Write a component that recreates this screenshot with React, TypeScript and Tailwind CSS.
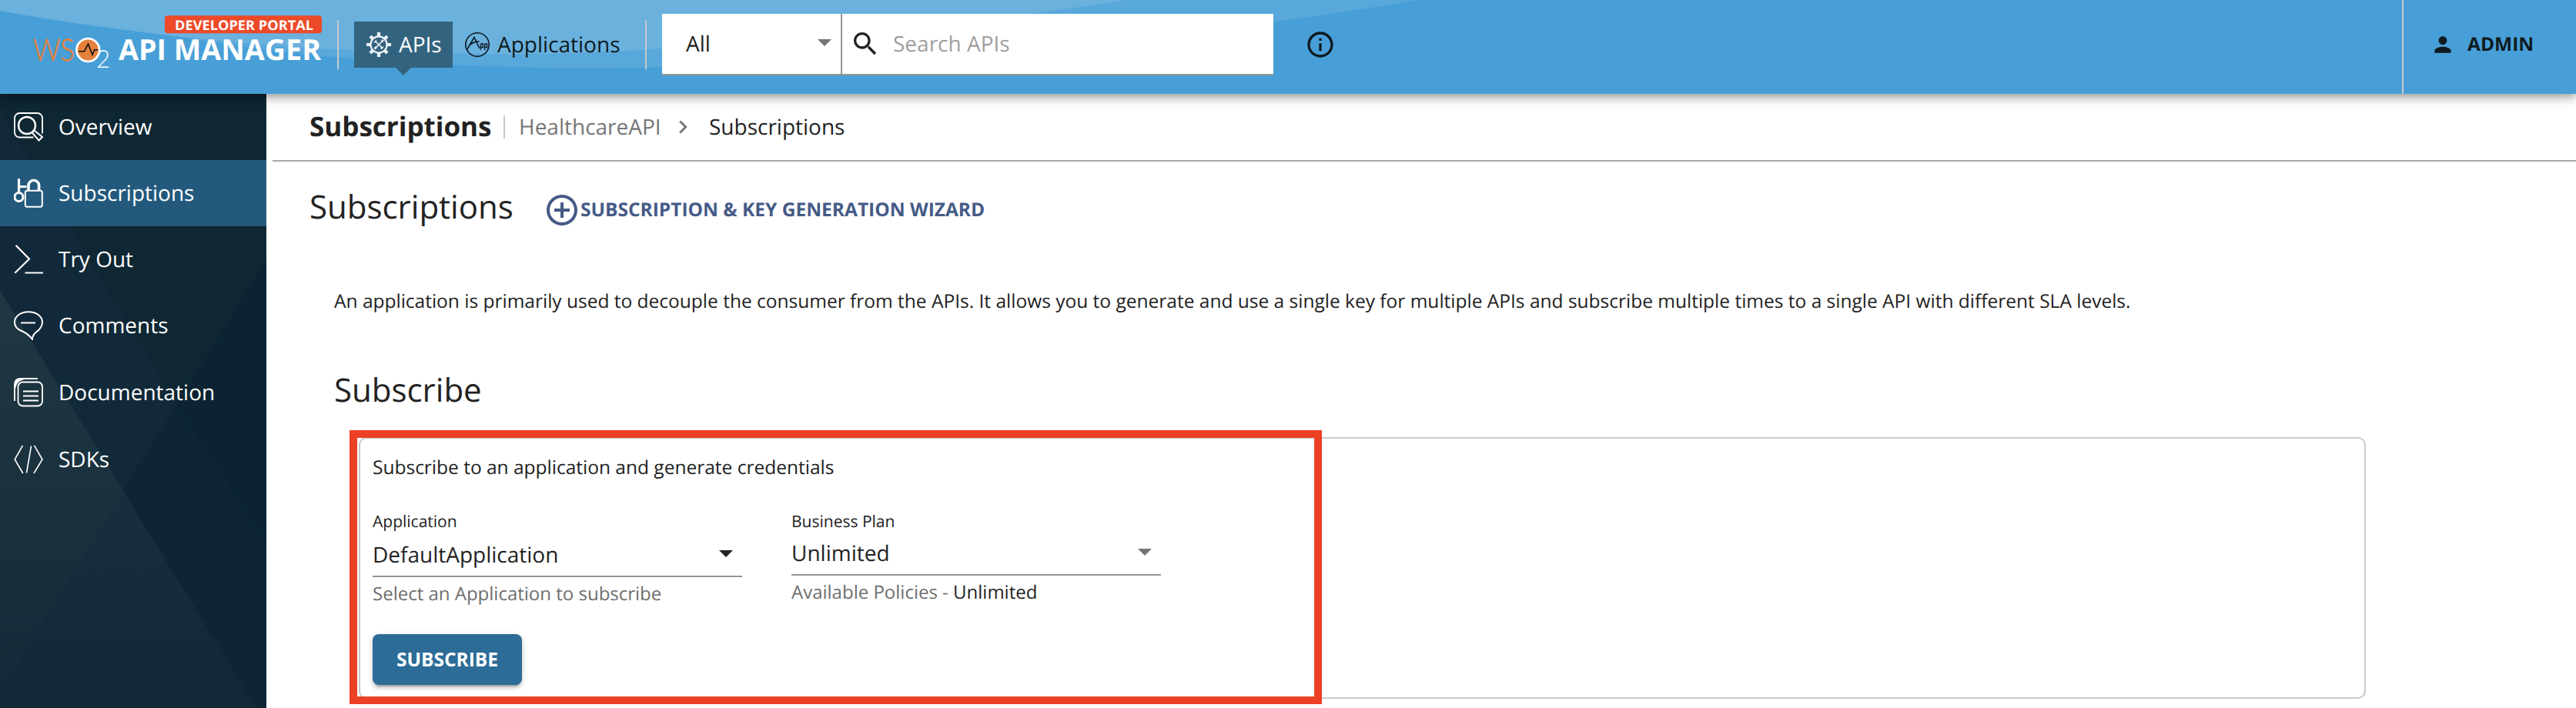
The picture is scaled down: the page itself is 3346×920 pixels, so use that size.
import type { ReactNode } from "react";

function Logo() {
  return (
    <svg width="375" height="122" viewBox="43 0 375 122" className="block shrink-0 overflow-visible">
      <text x="43" y="79" textLength="54" lengthAdjust="spacingAndGlyphs" fontFamily="Lato" fontWeight="300" fontSize="40" fill="#e5813b" stroke="#e5813b" strokeWidth="0.6">
        WS
      </text>
      <circle cx="114.3" cy="65" r="14.8" fill="#e5813b" stroke="#fff" strokeWidth="2.8" />
      <path d="M102 66.7h7.5l5-9.5 5.5 14 2.8-6.5h4.5" fill="none" stroke="#111" strokeWidth="1.6" />
      <text x="125" y="87.5" fontFamily="Lato" fontWeight="300" fontSize="32" fill="#fff" textLength="18" lengthAdjust="spacingAndGlyphs">
        2
      </text>
      <rect x="214" y="20.3" width="204" height="23" rx="4" fill="#ec4a28" />
      <text x="227" y="38.5" fontFamily="Open Sans" fontWeight="700" fontSize="17.5" fill="#fff" textLength="180" lengthAdjust="spacingAndGlyphs">
        DEVELOPER PORTAL
      </text>
      <text x="154" y="78" fontFamily="Open Sans" fontWeight="700" fontSize="37.5" fill="#fff" textLength="263" lengthAdjust="spacingAndGlyphs">
        API MANAGER
      </text>
    </svg>
  );
}

function GearIcon() {
  return (
    <svg width="32" height="32" viewBox="0 0 32 32" fill="none" stroke="#eef4fa" className="block shrink-0">
      <circle cx="16" cy="16" r="10.6" strokeWidth="2.2" />
      <path d="M16 5V0M16 32v-5M5 16H0M32 16h-5M8.2 8.2L5 5M27 27l-3.2-3.2M8.2 23.8L5 27M27 5l-3.2 3.2" strokeWidth="4.2" />
      <path d="M11.5 11.5l9.5 9.5M20.5 11.5L11 21" strokeWidth="1.6" />
      <path d="M9.8 12.6c1.2.9 3.2-.8 2.4-2.6M19.4 22c-.6-1.6 1-3.300 2.600-2.600" strokeWidth="1.5" />
      <path d="M20 12l2-2M10.500 21.500l2.500-2.500" strokeWidth="2.800" />
    </svg>
  );
}

function AppIcon() {
  return (
    <svg width="32" height="32" viewBox="0 0 32 32" fill="none" stroke="#0e1a20" className="block shrink-0">
      <circle cx="16" cy="16" r="15.200" strokeWidth="1.600" />
      <path d="M2.500 22.500L12 6.500l7 14.500M7 15.800c3.500-2.500 7.500-4 11.500-4" strokeWidth="1.600" />
      <path d="M20.400 15v8M20.400 15h3v4.500h-3M25.600 15v8M25.600 15h3v4.500h-3" strokeWidth="1.300" />
    </svg>
  );
}

function Triangle({ color }: { color: string }) {
  return (
    <svg width="18" height="9" viewBox="0 0 18 9" className="block shrink-0">
      <path d="M0 0h18L9 9z" fill={color} />
    </svg>
  );
}

function MaterialIcon({ size, d, color }: { size: number; d: string; color: string }) {
  return (
    <svg width={size} height={size} viewBox="0 0 24 24" fill={color} className="block shrink-0">
      <path d={d} />
    </svg>
  );
}

const ICONS = {
  search:
    "M15.500 14h-.79l-.28-.27C15.410 12.590 16 11.110 16 9.500 16 5.910 13.090 3 9.500 3S3 5.910 3 9.500 5.910 16 9.500 16c1.610 0 3.090-.59 4.230-1.570l.27.28v.79l5 4.990L20.490 19l-4.990-5zm-6 0C7.010 14 5 11.990 5 9.500S7.010 5 9.500 5 14 7.010 14 9.500 11.990 14 9.500 14z",
  info: "M11 7h2v2h-2zm0 4h2v6h-2zm1-9C6.480 2 2 6.480 2 12s4.480 10 10 10 10-4.480 10-10S17.520 2 12 2zm0 18c-4.410 0-8-3.590-8-8s3.590-8 8-8 8 3.590 8 8-3.590 8-8 8z",
  person:
    "M12 12c2.210 0 4-1.790 4-4s-1.790-4-4-4-4 1.790-4 4 1.790 4 4 4zm0 2c-2.670 0-8 1.340-8 4v2h16v-2c0-2.660-5.330-4-8-4z",
  add: "M13 7h-2v4H7v2h4v4h2v-4h4v-2h-4V7zm-1-5C6.480 2 2 6.480 2 12s4.480 10 10 10 10-4.480 10-10S17.520 2 12 2zm0 18c-4.410 0-8-3.590-8-8s3.590-8 8-8 8 3.590 8 8-3.590 8-8 8z",
  next: "M10 6L8.590 7.410 13.170 12l-4.580 4.590L10 18l6-6z",
};

function HeaderWaves() {
  return (
    <svg width="1860" height="122" viewBox="0 0 1860 122" className="absolute left-0 top-0">
      <path d="M0 0V14C80 30 160 38 233 48C350 68 500 86 740 88C1050 90 1500 60 1840 0Z" fill="#59a8db" />
      <path d="M0 0V14C150 40 300 58 450 65S740 72 860 63S1250 35 1462 0Z" fill="#6ab1de" />
    </svg>
  );
}

function Header() {
  return (
    <header className="relative z-10 flex h-[122px] items-start bg-[#489fd7] shadow-[0_4px_8px_-2px_rgba(0,0,0,0.2),0_8px_10px_0_rgba(0,0,0,0.14),0_2px_20px_0_rgba(0,0,0,0.12)]">
      <HeaderWaves />
      <div className="relative flex flex-1 items-start pl-[43px]">
        <Logo />
        <div className="ml-5 mt-[26px] h-16 w-0.5 bg-[#c8cacc]" />
        <nav className="flex">
          <div className="relative ml-5 mt-7 flex h-[60px] w-32 items-center bg-[#33647f] pl-4 text-white">
            <GearIcon />
            <span className="ml-2.5 text-[28px] leading-[58px]">APIs</span>
            <svg width="20" height="10" viewBox="0 0 20 10" className="absolute left-[54px] top-[60px]">
              <path d="M0 0h20L10 10z" fill="#33647f" />
            </svg>
          </div>
          <div className="mt-7 flex h-[60px] items-center pl-4 text-[#0e1a20]">
            <AppIcon />
            <span className="ml-2.5 w-[192px] text-[28px] leading-[58px]">Applications</span>
          </div>
        </nav>
        <div className="mt-[26px] h-16 w-0.5 bg-[#c8cacc]" />
        <div className="ml-5 mt-[18px] flex h-20 w-[794px] border-b-2 border-[#949494] bg-white text-[28px] leading-[78px]">
          <div className="flex w-[234px] items-center justify-between border-r-2 border-[#949494] pl-[31px] pr-3 text-[#222]">
            <span>All</span>
            <div className="-mt-1">
              <Triangle color="#757575" />
            </div>
          </div>
          <div className="flex items-center pl-2.5">
            <MaterialIcon size={40} d={ICONS.search} color="#222" />
            <span className="ml-4 text-[#a0a0a0]">Search APIs</span>
          </div>
        </div>
        <div className="ml-[41px] mt-[38px]">
          <MaterialIcon size={40} d={ICONS.info} color="#0e1a20" />
        </div>
      </div>
      <div className="flex h-full w-[226px] items-start border-l-2 border-[#c8cacc] pl-[35px] pt-[42px] text-[#0e1a20]">
        <MaterialIcon size={32} d={ICONS.person} color="#0e1a20" />
        <span className="ml-4 text-[24.5px] font-bold leading-8">ADMIN</span>
      </div>
    </header>
  );
}

function SideIcon({ children }: { children: ReactNode }) {
  return (
    <svg width="38" height="38" viewBox="0 0 38 38" fill="none" stroke="#fff" strokeWidth="1.8" className="block shrink-0">
      {children}
    </svg>
  );
}

const NAV: { label: string; row: string; icon: ReactNode }[] = [
  {
    label: "Overview",
    row: "h-[86px]",
    icon: (
      <>
        <path d="M25.500 32.500H7.500a6.500 6.500 0 0 1-6.500-6.500V7.500A6.500 6.500 0 0 1 7.500 1h23A6.500 6.500 0 0 1 37 7.500v20" />
        <circle cx="17" cy="17" r="11" strokeWidth="2.400" />
        <path d="M23.500 26l9 10.500 4.500-4.500-10.500-8.500" strokeWidth="2" />
      </>
    ),
  },
  {
    label: "Subscriptions",
    row: "h-[86px] bg-[#23597c]",
    icon: (
      <>
        <rect x="14.800" y="15.800" width="22" height="21" rx="2.500" strokeWidth="2" />
        <path d="M19 15V9a6.800 6.800 0 0 1 13.600 0v6" strokeWidth="3.600" />
        <path d="M6.500 0v17M6.500 10.500h10" strokeWidth="3.200" />
        <circle cx="6.500" cy="24" r="5.500" strokeWidth="3" />
      </>
    ),
  },
  {
    label: "Try Out",
    row: "h-[86px]",
    icon: <path d="M2.500.800L20 18.500 1.300 36.800M14.500 36.500H38" strokeWidth="2.200" />,
  },
  {
    label: "Comments",
    row: "h-[86px]",
    icon: (
      <path
        d="M19 1.200c-10 0-18 5.800-18 13.500 0 6 4 9.500 9.500 11.600 5.500 2.200 10 6 13.500 10.700.2-4 .800-6 4.500-9C34 24 37 20 37 14.700 37 7 29 1.200 19 1.200zM9 15.500h19"
        strokeWidth="2"
      />
    ),
  },
  {
    label: "Documentation",
    row: "h-[88px]",
    icon: (
      <>
        <rect x="5.500" y="5.500" width="31.500" height="31" rx="6" />
        <path d="M1 30V9c0-5 3-8 8-8h22M12 17.500h20M12 23.500h20M12 29.500h20" />
        <path d="M1 14C1 5 5 1.200 13 1.200 6 3 2.500 6 1 14z" fill="#fff" />
      </>
    ),
  },
  {
    label: "SDKs",
    row: "h-[86px]",
    icon: <path d="M11.500.800L1.200 19l10.600 18M26.500.800L37 19 26 37M22.500 1.500L16.500 36.500" strokeWidth="1.600" />,
  },
];

function SidebarBackdrop() {
  return (
    <svg width="346" height="798" viewBox="0 122 346 798" className="absolute left-0 top-0">
      <defs>
        <linearGradient id="wedge" x1="0" y1="378" x2="0" y2="920" gradientUnits="userSpaceOnUse">
          <stop offset="0" stopColor="#1e3542" />
          <stop offset="1" stopColor="#112837" />
        </linearGradient>
        <linearGradient id="wedgeLeft" x1="0" y1="378" x2="0" y2="920" gradientUnits="userSpaceOnUse">
          <stop offset="0" stopColor="#203843" />
          <stop offset="1" stopColor="#132a38" />
        </linearGradient>
      </defs>
      <path d="M0 122h346v798H0z" fill="#0f2733" />
      <path d="M346 338v582H0v-22z" fill="#0b2332" />
      <path d="M0 145L230 526 160 638 0 898z" fill="#112938" />
      <path d="M230 526L346 706V920H0v-22z" fill="#0d2535" />
      <path d="M0 378L333 920H0z" fill="url(#wedge)" />
      <path d="M0 378L161 638 0 898z" fill="url(#wedgeLeft)" />
    </svg>
  );
}

function Sidebar() {
  return (
    <aside className="relative w-[346px] shrink-0 overflow-hidden">
      <SidebarBackdrop />
      <nav className="relative flex flex-col">
        {NAV.map((item) => (
          <div key={item.label} className={`${item.row} flex items-center pl-[18px] text-white`}>
            <SideIcon>{item.icon}</SideIcon>
            <span className="ml-5 text-[28px] leading-[38px]">{item.label}</span>
          </div>
        ))}
      </nav>
    </aside>
  );
}

function Breadcrumbs() {
  return (
    <div className="ml-2 flex h-[88px] items-center border-b-2 border-[#a9a9a9] pl-12 text-[28px] leading-[38px]">
      <h1 className="w-[252px] text-[35px] font-bold leading-[48px]">Subscriptions</h1>
      <div className="h-[30px] w-0.5 bg-[#c8c8c8]" />
      <span className="ml-[18px] w-[196px] text-[#757575]">HealthcareAPI</span>
      <span className="w-[51px]">
        <MaterialIcon size={34} d={ICONS.next} color="#757575" />
      </span>
      <span>Subscriptions</span>
    </div>
  );
}

function SubscribeCard() {
  return (
    <section className="relative ml-8 mt-[33px] h-[340px] w-[2607px] rounded-[10px] border-2 border-[#c8c8c8] px-4">
      <div className="absolute -left-[14px] -top-[11px] h-[356px] w-[1263px] border-[10px] border-[#ec4025]" />
      <p className="mt-5 text-[24.5px] leading-9">Subscribe to an application and generate credentials</p>
      <div className="mt-[38px] flex items-start gap-16">
        <div className="w-[480px]">
          <div className="text-[21px] leading-7">Application</div>
          <div className="mt-2 flex h-[50px] items-start justify-between border-b-2 border-[#949494] pr-3">
            <span className="text-[28px] leading-[42px]">DefaultApplication</span>
            <span className="mt-[15px]">
              <Triangle color="#222" />
            </span>
          </div>
          <div className="mt-1 text-[24px] leading-9 text-[#6e6e6e]">Select an Application to subscribe</div>
        </div>
        <div className="w-[480px]">
          <div className="text-[21px] leading-7">Business Plan</div>
          <div className="mt-1.5 flex h-[50px] items-start justify-between border-b-2 border-[#949494] pr-3">
            <span className="text-[28px] leading-[42px]">Unlimited</span>
            <span className="mt-[15px]">
              <Triangle color="#757575" />
            </span>
          </div>
          <div className="mt-1 text-[24px] leading-9 text-[#6e6e6e]">
            Available Policies - <span className="text-[#222]">Unlimited</span>
          </div>
        </div>
      </div>
      <button className="mt-[34px] flex h-[66px] w-[194px] items-center justify-center rounded-lg bg-[#2c6c97] text-[24.5px] font-bold text-white shadow-[0_6px_2px_-4px_rgba(0,0,0,0.2),0_4px_4px_0_rgba(0,0,0,0.14),0_2px_10px_0_rgba(0,0,0,0.12)]">
        SUBSCRIBE
      </button>
    </section>
  );
}

export default function App() {
  return (
    <div className="flex h-[920px] w-[3346px] flex-col overflow-hidden bg-white font-['Open_Sans',sans-serif] text-[#222] antialiased [text-rendering:geometricPrecision]">
      <Header />
      <div className="flex flex-1">
        <Sidebar />
        <main className="flex-1">
          <Breadcrumbs />
          <div className="flex pl-14 pt-[31px]">
            <h2 className="w-[304px] text-[42px] leading-[56px]">Subscriptions</h2>
            <div className="mt-2 flex h-12 items-center text-[24.5px] font-bold text-[#455a86]">
              <MaterialIcon size={48} d={ICONS.add} color="#455a86" />
              <span>SUBSCRIPTION &amp; KEY GENERATION WIZARD</span>
            </div>
          </div>
          <div className="pl-[88px] pt-[77px]">
            <p className="text-[24.5px] leading-9">
              An application is primarily used to decouple the consumer from the APIs. It allows you to generate and use a
              single key for multiple APIs and subscribe multiple times to a single API with different SLA levels.
            </p>
            <h3 className="mt-[69px] text-[42px] leading-[56px]">Subscribe</h3>
            <SubscribeCard />
          </div>
        </main>
      </div>
    </div>
  );
}
